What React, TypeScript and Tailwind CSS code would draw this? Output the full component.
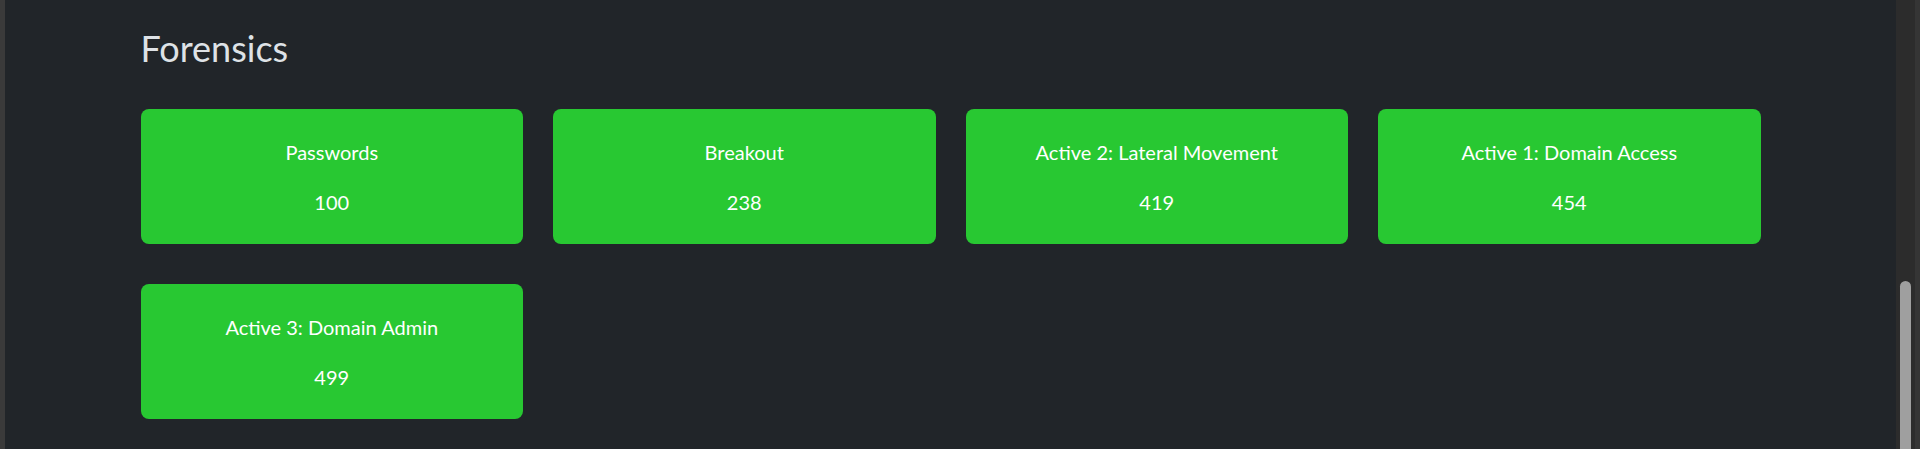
const cards = [
  { title: 'Passwords', score: 100 },
  { title: 'Breakout', score: 238 },
  { title: 'Active 2: Lateral Movement', score: 419 },
  { title: 'Active 1: Domain Access', score: 454 },
  { title: 'Active 3: Domain Admin', score: 499 },
]

const App = () => (
  <div
    className="flex h-[449px] w-full overflow-hidden bg-[#212529]"
    style={{ fontFamily: 'Lato, "Noto Sans", sans-serif' }}
  >
    <div className="w-[5px] shrink-0 bg-[#3a3a3a]" />
    <main className="flex-1">
      <div className="mx-auto w-[1620px] pt-[27px]">
        <h2 className="text-[36px] leading-[1.2] font-normal text-[#dee2e6]">
          Forensics
        </h2>
        <div className="mt-[39px] grid grid-cols-4 gap-x-[30px] gap-y-[40px]">
          {cards.map((card) => (
            <div
              key={card.title}
              className="flex h-[135px] flex-col items-center rounded-lg bg-[#28c832] pt-[31px] text-white"
            >
              <h5 className="text-[20px] leading-[24px] font-normal">
                {card.title}
              </h5>
              <p className="mt-[26px] text-[20px] leading-[24px]">
                {card.score}
              </p>
            </div>
          ))}
        </div>
      </div>
    </main>
    <div className="flex w-[19px] shrink-0 justify-center bg-[#2c2c2c]">
      <div className="mt-[281px] h-[200px] w-[11px] rounded-t-full bg-[#9f9f9f]" />
    </div>
    <div className="w-[5px] shrink-0 bg-[#353535]" />
  </div>
)

export default App
